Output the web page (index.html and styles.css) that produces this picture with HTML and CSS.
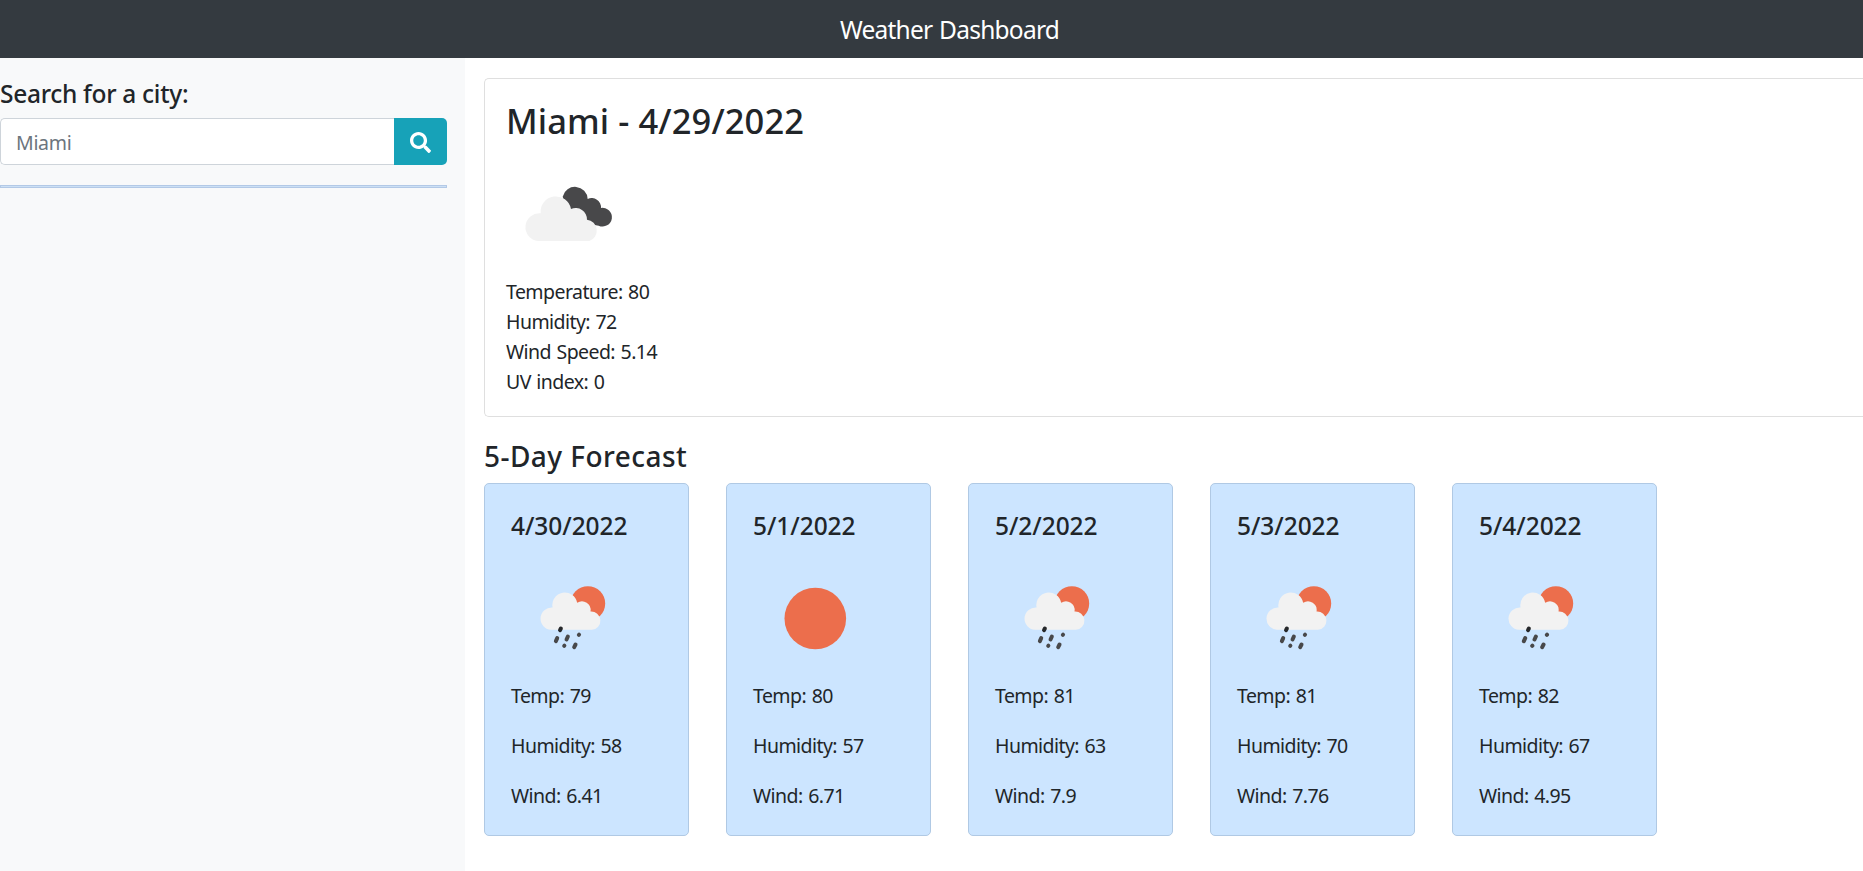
FILE: index.html
```html
<!DOCTYPE html>
<html lang="en">
<head>
<meta charset="utf-8">
<title>Weather Dashboard</title>
<link rel="stylesheet" href="styles.css">
</head>
<body>
<svg width="0" height="0" class="sprite">
  <defs>
    <symbol id="rain" viewBox="-27.6 -43.5 375 375">
      <circle cx="203" cy="99" r="52" fill="#ec6e4c"/>
      <path fill="#f2f2f2" d="M92 178A33.500 33.500 0 0 1 97 111A37 37 0 0 1 171 97A26 26 0 0 1 211 123A27.500 27.500 0 0 1 215 178Z"/>
      <g stroke="#48484a" stroke-width="12" stroke-linecap="round">
        <path d="M119.500 179L122 174" stroke="#26282b"/>
        <path d="M107 212L111 203M139 207L143 198M132 226L132.500 225.500M176 193L176.500 192.500M162 230L166 222"/>
      </g>
    </symbol>
    <symbol id="sun" viewBox="0 0 125 125"><circle cx="62.300" cy="62.500" r="30.800" fill="#ec6e4c"/></symbol>
    <symbol id="clouds" viewBox="108 273 375 375">
      <path fill="#48484a" d="M278 410A38 38 0 0 1 353 417A28 28 0 0 1 393 444A28 28 0 1 1 386 497L345 490L290 445Z"/>
      <path fill="#f2f2f2" d="M204 543A41.500 41.500 0 0 1 212 460A46 46 0 0 1 303 447A34 34 0 0 1 351 479A33 33 0 0 1 358 543Z"/>
    </symbol>
  </defs>
</svg>
<header class="navbar">Weather Dashboard</header>
<main class="layout">
  <aside class="sidebar">
    <h4 class="search-title">Search for a city:</h4>
    <form class="search">
      <input class="search-input" type="text" placeholder="Miami" aria-label="City">
      <button class="search-button" type="button" aria-label="Search">
        <svg class="search-icon" viewBox="0 0 512 512"><path fill="#fff" d="M505 442.700L405.300 343c-4.500-4.500-10.600-7-17-7H372c27.600-35.300 44-79.700 44-128C416 93.100 322.900 0 208 0S0 93.100 0 208s93.100 208 208 208c48.300 0 92.700-16.400 128-44v16.300c0 6.400 2.500 12.500 7 17l99.700 99.700c9.400 9.400 24.600 9.400 33.900 0l28.300-28.300c9.400-9.400 9.400-24.600.1-34zM208 336c-70.700 0-128-57.200-128-128 0-70.700 57.200-128 128-128 70.700 0 128 57.200 128 128 0 70.700-57.200 128-128 128z"/></svg>
      </button>
    </form>
    <div class="divider"></div>
  </aside>
  <section class="content">
    <article class="current">
      <h2 class="current-title">Miami - 4/29/2022</h2>
      <svg class="icon"><use href="#clouds"/></svg>
      <p>Temperature: 80</p>
      <p>Humidity: 72</p>
      <p>Wind Speed: 5.14</p>
      <p>UV index: 0</p>
    </article>
    <h3 class="forecast-title">5-Day Forecast</h3>
    <div class="forecast">
      <article class="day"><h4>4/30/2022</h4><svg class="icon"><use href="#rain"/></svg><p>Temp: 79</p><p>Humidity: 58</p><p>Wind: 6.41</p></article>
      <article class="day"><h4>5/1/2022</h4><svg class="icon"><use href="#sun"/></svg><p>Temp: 80</p><p>Humidity: 57</p><p>Wind: 6.71</p></article>
      <article class="day"><h4>5/2/2022</h4><svg class="icon"><use href="#rain"/></svg><p>Temp: 81</p><p>Humidity: 63</p><p>Wind: 7.9</p></article>
      <article class="day"><h4>5/3/2022</h4><svg class="icon"><use href="#rain"/></svg><p>Temp: 81</p><p>Humidity: 70</p><p>Wind: 7.76</p></article>
      <article class="day"><h4>5/4/2022</h4><svg class="icon"><use href="#rain"/></svg><p>Temp: 82</p><p>Humidity: 67</p><p>Wind: 4.95</p></article>
    </div>
  </section>
</main>
</body>
</html>
```
FILE: styles.css
```css
* { box-sizing: border-box; }
body {
  margin: 0;
  height: 871px;
  display: flex;
  flex-direction: column;
  overflow: hidden;
  background: #fff;
  color: #212529;
  font: 400 19.5px/30px "Noto Sans", "Open Sans", sans-serif;
  letter-spacing: -0.56px;
  word-spacing: 1px;
}
h2, h3, h4, p { margin: 0; }
h2, h3, h4 { font-weight: 500; letter-spacing: -0.05px; word-spacing: 0; }
.sprite { position: absolute; }
.navbar {
  flex: 0 0 58px;
  height: 58px;
  padding: 1px 0 0 36px;
  background: #343a40;
  color: #fff;
  text-align: center;
  font-size: 24.5px;
  line-height: 57px;
  letter-spacing: -0.75px;
}
.layout { flex: 1; display: flex; min-height: 0; }
.sidebar { flex: 0 0 465px; padding: 20px 18px 0 0; background: #f8f9fa; }
.search-title { height: 40px; font-size: 24.5px; line-height: 32px; letter-spacing: -0.3px; }
.search { display: flex; height: 47px; }
.search-input {
  flex: 1;
  min-width: 0;
  padding: 2px 15px 0;
  border: 1px solid #ced4da;
  border-right: 0;
  border-radius: 5px 0 0 5px;
  background: #fff;
  font: inherit;
  letter-spacing: -0.3px;
}
.search-input::placeholder { color: #6c757d; opacity: 1; }
.search-button {
  width: 53px;
  padding: 0;
  border: 0;
  border-radius: 0 5px 5px 0;
  background: #17a2b8;
  display: flex;
  align-items: center;
  justify-content: center;
}
.search-icon { width: 21px; height: 21px; margin-top: 2px; }
.divider { height: 3px; margin-top: 20px; background: #cce0f5; border: 1px solid #b3c9e6; }
.content { flex: 1; min-width: 0; padding: 20px 0 0 19px; }
.current {
  height: 339px;
  padding: 21px 21px 0;
  border: 1px solid #dfdfdf;
  border-right: 0;
  border-radius: 5px 0 0 5px;
}
.current-title { height: 51px; font-size: 34.5px; line-height: 42px; letter-spacing: 0.1px; }
.icon { display: block; width: 125px; height: 125px; }
.current .icon { margin-bottom: 1px; }
.forecast-title { margin-top: 22px; height: 44px; font-size: 28px; line-height: 35px; letter-spacing: 0.45px; }
.forecast { display: flex; gap: 37px; }
.day {
  width: 205px;
  height: 353px;
  padding: 25px 26px 0;
  border: 1px solid #b0c9e4;
  border-radius: 5px;
  background: #cce5ff;
}
.day h4 { height: 46.5px; font-size: 24.5px; line-height: 34px; }
.day p { height: 50px; }
```
